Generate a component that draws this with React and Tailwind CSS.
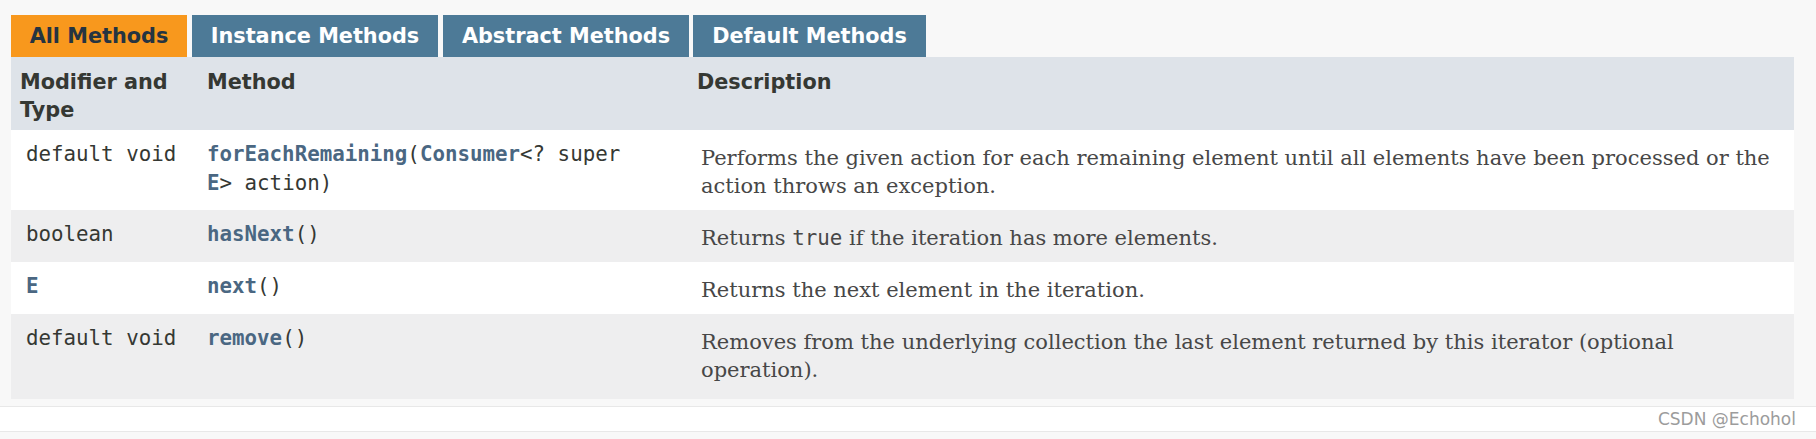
const rows = [
  {
    type: "default void",
    method: (
      <>
        <span className="font-bold text-[#4a6782]">forEachRemaining</span>(
        <span className="font-bold text-[#4a6782]">Consumer</span>&lt;? super{" "}
        <span className="font-bold text-[#4a6782]">E</span>&gt; action)
      </>
    ),
    desc: "Performs the given action for each remaining element until all elements have been processed or the action throws an exception.",
  },
  {
    type: "boolean",
    method: (
      <>
        <span className="font-bold text-[#4a6782]">hasNext</span>()
      </>
    ),
    desc: (
      <>
        Returns <code className="font-['DejaVu_Sans_Mono',monospace] text-[20.8px]">true</code> if the iteration has more elements.
      </>
    ),
  },
  {
    type: <span className="font-bold text-[#4a6782]">E</span>,
    method: (
      <>
        <span className="font-bold text-[#4a6782]">next</span>()
      </>
    ),
    desc: "Returns the next element in the iteration.",
  },
  {
    type: "default void",
    method: (
      <>
        <span className="font-bold text-[#4a6782]">remove</span>()
      </>
    ),
    desc: "Removes from the underlying collection the last element returned by this iterator (optional operation).",
  },
];

const tabs = [
  { label: "All Methods", cls: "w-[176px] mr-[5px] bg-[#f8981d] text-[#253441]" },
  { label: "Instance Methods", cls: "w-[246px] mr-[5px] bg-[#4d7a97] text-white" },
  { label: "Abstract Methods", cls: "w-[246px] mr-[4px] bg-[#4d7a97] text-white" },
  { label: "Default Methods", cls: "w-[233px] bg-[#4d7a97] text-white" },
];

export default function App() {
  return (
    <div className="w-[1816px] h-[439px] overflow-hidden bg-[#f8f8f8] font-['DejaVu_Sans',sans-serif] text-[20.8px] text-[#353833]">
      <div className="pt-[15px] pl-[11px] pr-[22px]">
        {/* tabs */}
        <div className="flex">
          {tabs.map((t) => (
            <div
              key={t.label}
              className={"h-[42px] pt-[2px] flex items-center justify-center font-bold whitespace-nowrap " + t.cls}
            >
              {t.label}
            </div>
          ))}
        </div>

        {/* header */}
        <div className="grid grid-cols-[187px_488px_1fr] bg-[#dee3e9] font-bold leading-[28px]">
          <div className="pl-[9px] pr-[20px] pt-[11px] pb-[6px]">Modifier and Type</div>
          <div className="pl-[9px] pt-[11px] pb-[6px]">Method</div>
          <div className="pl-[11px] pt-[11px] pb-[6px]">Description</div>
        </div>

        {/* rows */}
        {rows.map((r, i) => (
          <div
            key={i}
            className={
              i % 2 === 0
                ? "grid grid-cols-[187px_488px_1fr] bg-white"
                : "grid grid-cols-[187px_488px_1fr] bg-[#eeeeef]"
            }
          >
            <div className="pl-[15px] pt-[10px] font-['DejaVu_Sans_Mono',monospace] leading-[29px]">{r.type}</div>
            <div className="pl-[9px] pr-[40px] pt-[10px] font-['DejaVu_Sans_Mono',monospace] leading-[29px]">{r.method}</div>
            <div
              className={
                i === rows.length - 1
                  ? "pl-[15px] pr-[10px] pt-[14px] pb-[15px] font-['DejaVu_Serif',serif] text-[21px] leading-[28px] text-[#474747]"
                  : "pl-[15px] pr-[10px] pt-[14px] pb-[10px] font-['DejaVu_Serif',serif] text-[21px] leading-[28px] text-[#474747]"
              }
            >
              {r.desc}
            </div>
          </div>
        ))}
      </div>

      {/* footer band with watermark */}
      <div className="mt-[7px] h-[26px] bg-white border-y border-[#e8e8e8] flex items-center justify-end pr-[20px]">
        <span className="text-[17px] text-[#9c9c9c] leading-none">CSDN @Echohol</span>
      </div>
    </div>
  );
}
